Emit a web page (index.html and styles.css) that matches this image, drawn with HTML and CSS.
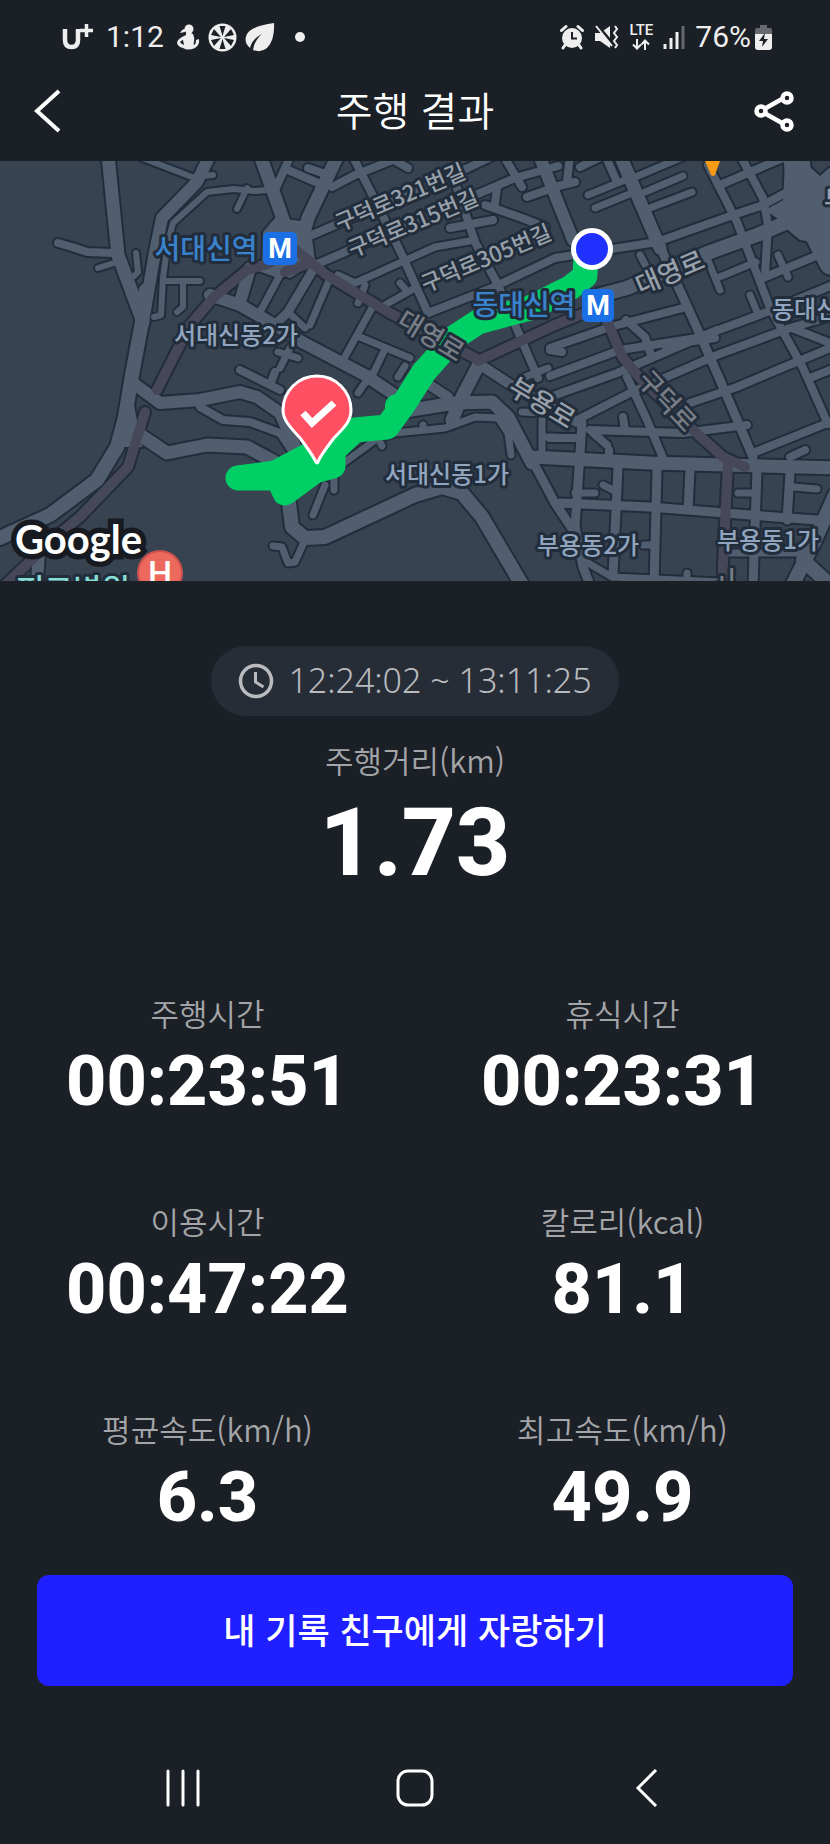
FILE: index.html
```html
<!DOCTYPE html>
<html lang="ko">
<head>
<meta charset="utf-8">
<meta name="viewport" content="width=device-width, initial-scale=1">
<title>주행 결과</title>
<link rel="stylesheet" href="styles.css">
</head>
<body>
<div class="status">
  <div class="status-left">
    <svg class="carrier" width="32" height="26" viewBox="0 0 32 26" role="img" aria-label="U+"><path d="M3 5v11q0 7 6.500 7t6.500-7V5" fill="none" stroke="#eee" stroke-width="4.500"/><path d="M24.500 0v13M18 6.500h13" stroke="#eee" stroke-width="3.500"/></svg>
    <span class="clock">1:12</span>
    <span class="notices">
      <svg width="24" height="28" viewBox="0 0 24 28" aria-hidden="true"><g fill="#eee"><circle cx="13" cy="6" r="4.500"/><path d="M10 10q4-1 7 1 2 4 1 8-1 2 0 3 2-1 2-5l3-1q1 6-4 9-7 3-12 0-5-1-6-5 0-3 5-6l4-2z"/><path d="M9 6q-3 0-5 4l5-1z"/></g><path d="M4 19q2-2 3-2l1 5q-3-1-4-3z" fill="#1b1f26"/></svg>
      <svg width="29" height="29" viewBox="0 0 29 29" aria-hidden="true"><circle cx="14.500" cy="14.500" r="14" fill="#eee"/><g fill="#1b1f26"><path d="M14.500 13 11.500 3h6z"/><path d="M14.500 16 11.500 26h6z"/><path d="M13 14 3 12l3-6z"/><path d="M16 14 26 12l-3-6z"/><path d="M13 15 3 17l3 6z"/><path d="M16 15 26 17l-3 6z"/></g></svg>
      <svg width="30" height="29" viewBox="0 0 30 29" aria-hidden="true"><path d="M29 0q1 17-7 25-6 5-14 2 1-9 9-16Q7 16 5 25q-7-6-3-14Q7 3 29 0z" fill="#eee"/></svg>
    </span>
    <svg class="more-dot" width="10" height="10" viewBox="0 0 10 10" aria-hidden="true"><circle cx="5" cy="5" r="5" fill="#eee"/></svg>
  </div>
  <div class="status-right">
    <svg width="24" height="26" viewBox="0 0 24 26" aria-hidden="true"><circle cx="12" cy="14" r="10" fill="#eee"/><path d="M1.500 6.500 6 2.500M22.500 6.500 18 2.500" stroke="#eee" stroke-width="3" stroke-linecap="round"/><path d="m5 21-2 3m16-3 2 3" stroke="#eee" stroke-width="3" stroke-linecap="round"/><path d="M12 8v6.500h5" fill="none" stroke="#1b1f26" stroke-width="2"/></svg>
    <svg width="25" height="26" viewBox="0 0 25 26" aria-hidden="true"><path d="M1 9h5l10-7v22L6 17H1z" fill="#eee"/><path d="m3 1 17 20" stroke="#1b1f26" stroke-width="3"/><path d="m2 2 16 20" stroke="#eee" stroke-width="2"/><path d="m21 2 2 3-3 4 3 4-3 4 3 4-2 3" fill="none" stroke="#eee" stroke-width="2"/></svg>
    <span class="network"><span class="lte">LTE</span><svg width="18" height="11" viewBox="0 0 18 11" aria-hidden="true"><path d="M5 0v9M1 5.500l4 4 4-4M13 11V2M9.500 5.500l3.500-4 4 4" fill="none" stroke="#eee" stroke-width="2"/></svg></span>
    <svg class="signal" width="22" height="24" viewBox="0 0 22 24" aria-hidden="true"><path d="M2 24v-5M8 24V13M14 24V7" stroke="#eee" stroke-width="3"/><path d="M20 24V1" stroke="#666a70" stroke-width="3"/></svg>
    <span class="percent">76%</span>
    <svg width="17" height="25" viewBox="0 0 17 25" aria-hidden="true"><path d="M5 0h7v3h3q2 0 2 2v5H0V5q0-2 2-2h3z" fill="#666a70"/><path d="M0 9h17v13q0 3-3 3H3q-3 0-3-3z" fill="#eee"/><path d="m10 8-6 8h4l-1 6 6-8H9z" fill="#1b1f26"/></svg>
  </div>
</div>

<header class="header">
  <button class="icon-btn" type="button" aria-label="뒤로"><svg width="28" height="44" viewBox="0 0 28 44"><path d="M25 2 3 22l22 20" fill="none" stroke="#fff" stroke-width="4"/></svg></button>
  <h1 class="title">주행 결과</h1>
  <button class="icon-btn" type="button" aria-label="공유"><svg width="42" height="44" viewBox="0 0 42 44"><g fill="none" stroke="#fff" stroke-width="4.500"><path d="M12 19 28 10M12 25l16 9"/><circle cx="7" cy="22" r="4.500"/><circle cx="33" cy="9" r="4.500"/><circle cx="33" cy="36" r="4.500"/></g></svg></button>
</header>

<main class="main">
<svg class="map" viewBox="0 161 830 420" role="img" aria-label="주행 경로 지도">
  <defs>
    <g id="roads">
      <path class="road w13" d="M108 155 118 255 143 322"/>
      <path class="road w14" d="M146 290 142 322 132 375 125 417 117 447 97 480 50 515 0 538"/>
      <path class="road w12" d="M210 155 197 182 162 218 155 252 143 322"/>
      <path class="road w6" d="M140 157 192 177 213 175"/>
      <path class="road w6" d="M268 190 255 191 233 189 207 192 173 223 168 242 163 278 161 315 154 317"/>
      <path class="road w6" d="M247 188 237 209M98 268 117 262M136 253 138 272 133 277M163 281H200M183 281V307L177 312"/>
      <path class="road w8" d="M58 243 72 247 87 252 113 253"/>
      <path class="road w13" d="M260 155 278 205 290 240M338 155 308 218 298 255"/>
      <path class="road w8" d="M291 155 275 190M288 170 318 183M308 168 328 175M332 187 355 175 400 157M408 168 385 155"/>
      <path class="road w8" d="M352 155 375 200 402 255 428 313M312 235 468 168 495 155M315 265 345 252 480 193 515 178 558 166"/>
      <path class="road w7" d="M338 275 355 283 435 247 475 240M358 303 365 285M385 305 415 288M400 283 408 292"/>
      <path class="road w8" d="M428 313 492 288 555 258 657 242 733 215 763 205 787 192"/>
      <path class="road w8" d="M455 182 475 242 498 285 528 355 538 378M450 228 493 220M485 205 522 218 545 227M497 188 495 203M503 155 522 187M527 197 550 189"/>
      <path class="road w12" d="M539 155 553 190 573 240"/>
      <path class="road w8" d="M550 188 575 182M570 155 567 182M580 167 605 155M605 155 617 182"/>
      <path class="road w12" d="M210 295 240 305 280 328 302 342 365 375 405 402"/>
      <path class="road w12" d="M250 268 240 302"/>
      <path class="road w7" d="M252 265 280 275 260 312M330 278 310 325M288 312 305 328M372 308 342 362M360 337 410 358M385 349 372 376M278 352 298 358M290 348 280 368"/>
      <path class="road w9" d="M313 270 288 312 275 325"/>
      <path class="road w13" d="M620 155 660 248"/>
      <path class="road w9" d="M657 240 697 328 720 380 753 457"/>
      <path class="road w7" d="M588 195 625 180M595 208 632 193M645 192 683 176M650 208 692 192M633 178 685 156M640 255 647 268M707 258 720 290M717 278 756 262M750 295 757 312M778 255 788 277"/>
      <path class="road w8" d="M708 165 737 222 770 308 803 368 828 424M740 155 763 198 768 225 765 275M720 185 785 157M763 278 835 248"/>
      <path class="road w14" d="M593 297 627 288 710 252 757 235 797 218"/>
      <path class="road w26" d="M795 150 803 205 832 262M800 212 835 180"/>
      <path class="road w8" d="M550 348 610 327 683 308M550 376 620 350 697 338 767 312 835 284M550 397 617 373 717 330M577 420 630 393 717 355 790 328 835 315M690 403 737 387 777 370 835 346M626 320 645 337 652 358M665 345 715 338M550 350 562 352M792 328 835 345"/>
      <path class="road w8" d="M627 377 647 420 663 458M753 453 835 420M590 430 683 433 747 425M810 378 835 368M623 417 625 430M790 457 805 450M593 433 607 445M609 450V456M550 438H577"/>
      <path class="road w10" d="M422 380 448 397M482 366 508 383 577 422"/>
      <path class="road w13" d="M532 457 650 463 835 468M478 366 462 397 452 420M405 411 455 403 492 402 508 417 532 463"/>
      <path class="road w9" d="M532 460 555 503 573 530M582 423 575 527 583 567 590 585M618 467 613 575M657 470 654 585M690 470 688 510M757 470 753 585M790 473 787 520M560 503 650 507 750 515 817 520"/>
      <path class="road w7" d="M575 493H595M603 485 617 492M738 493H754M793 487 817 489M643 545H655M583 560 612 577M613 577 720 582M687 573V580M730 553 800 553"/>
      <path class="road w14" d="M835 495 815 540 790 590M803 560 830 585"/>
      <path class="road w7" d="M345 462 378 438 395 433 445 428 475 417 498 418 508 433 511 455M423 425V430M378 438 382 446M522 412 542 413M542 420V455M542 437H556M398 377 405 366M358 393 372 373M525 377 548 368M334 478V490M325 485 313 515M273 546 282 547 288 563 295 562 305 540"/>
      <path class="road w14" d="M288 495 292 527 305 538 325 537 415 495 442 487 462 493 482 517 525 590"/>
      <path class="road w12" d="M133 383 160 403 200 400 240 392 257 397 280 413 300 457"/>
      <path class="road w8" d="M200 407 223 420 250 422 280 433 297 458M240 370 280 390M275 372 270 385"/>
      <path class="road w13" d="M137 433 167 453 207 445 247 447 275 462"/>
      <path class="road w12" d="M40 530 37 585"/>
      <path class="area" d="M263 232 275 218 310 222 315 262 290 278 262 268zM785 161 803 161 830 185V245L800 240 782 225zM133 400 117 447 142 447zM765 210 787 198 787 225z"/>
    </g>
    <g id="rails">
      <path class="rail w10" d="M285 272 312 262M290 245 325 274 388 312 475 358M478 361 555 325 587 312 600 305 623 358 640 378 693 430 723 457 745 467M728 463 723 563V590"/>
      <path class="rail w10" d="M270 263 247 270 213 298 190 325 163 378 157 390M145 412 128 467 80 517 58 535 5 585"/>
    </g>
  </defs>
  <rect x="0" y="161" width="830" height="420" fill="#384352"/>
  <use href="#roads" class="casing"/>
  <use href="#rails" class="casing"/>
  <use href="#roads" class="surface"/>
  <use href="#rails" class="rail-surface"/>
  <path d="M705 161h15l-5 14q-2 2-4 0z" fill="#f79a14"/>

  <g class="route">
    <path d="M424 372 455 337 478 322 530 308 570 288 585 276 586 255"/>
    <path d="M424 372 403 405 387 427 355 430 338 446"/>
    <path class="solid" d="M238 478 275 473 315 452 333 448 333 466 315 471 285 493 278 478z"/>
    <circle cx="397" cy="406" r="12"/>
  </g>

  <g class="street">
    <text transform="translate(400 197) rotate(-23)" y="8">구덕로321번길</text>
    <text transform="translate(413 223) rotate(-23)" y="8">구덕로315번길</text>
    <text transform="translate(486 258) rotate(-23)" y="8">구덕로305번길</text>
  </g>
  <g class="street avenue">
    <text class="dim" transform="translate(431 336) rotate(31)" y="9">대영로</text>
    <text transform="translate(670 273) rotate(-23)" y="9">대영로</text>
    <text transform="translate(542 403) rotate(31)" y="9">부용로</text>
    <text class="dim" transform="translate(667 401) rotate(47)" y="9">구덕로</text>
    <text class="dim" x="724" y="590">ㅚ</text>
    <text x="836" y="210">부</text>
  </g>
  <g class="district">
    <text x="236" y="344">서대신동2가</text>
    <text x="447" y="483">서대신동1가</text>
    <text x="588" y="554">부용동2가</text>
    <text x="768" y="549">부용동1가</text>
    <text class="from-left" x="772" y="318">동대신동</text>
  </g>
  <g class="station">
    <text x="206" y="259">서대신역</text>
    <text x="524" y="315">동대신역</text>
    <rect x="263" y="232" width="34" height="33" rx="5"/>
    <rect x="582" y="289" width="32" height="33" rx="5"/>
    <text class="metro" x="280" y="258">M</text>
    <text class="metro" x="598" y="315">M</text>
  </g>
  <circle cx="592" cy="249" r="18.500" fill="#2030ff" stroke="#fff" stroke-width="5"/>
  <path d="M316 462q-4-8-16-24c-12-13-17-19-17-28a34 34 0 0 1 68 0c0 10-5 16-17 28q-14 18-16 24-1 2-2 0z" fill="#ff4f63" stroke="#fff" stroke-width="3"/>
  <path d="M303 413 312 423 334 403" fill="none" stroke="#fff" stroke-width="7"/>
  <text class="hospital" x="73" y="601">피그병원</text>
  <circle cx="160" cy="573" r="22" fill="#ee695d" stroke="#c9524c" stroke-width="2"/>
  <text class="hospital-mark" x="160" y="585">H</text>
  <text class="google" x="15" y="554">Google</text>
</svg>

<section class="summary">
  <p class="period"><svg width="36" height="36" viewBox="0 0 36 36" aria-hidden="true"><circle cx="18" cy="18" r="15.500" fill="none" stroke="#b9bbbf" stroke-width="3.500"/><path d="M17.500 9v10l8 5" fill="none" stroke="#b9bbbf" stroke-width="3"/></svg><span>12:24:02 ~ 13:11:25</span></p>
  <dl class="stat hero"><dt>주행거리(km)</dt><dd>1.73</dd></dl>
</section>

<section class="stats">
  <dl class="stat"><dt>주행시간</dt><dd>00:23:51</dd></dl>
  <dl class="stat"><dt>휴식시간</dt><dd>00:23:31</dd></dl>
  <dl class="stat"><dt>이용시간</dt><dd>00:47:22</dd></dl>
  <dl class="stat"><dt>칼로리(kcal)</dt><dd>81.1</dd></dl>
  <dl class="stat"><dt>평균속도(km/h)</dt><dd>6.3</dd></dl>
  <dl class="stat"><dt>최고속도(km/h)</dt><dd>49.9</dd></dl>
</section>

<button class="share" type="button">내 기록 친구에게 자랑하기</button>
</main>

<nav class="system-nav">
  <button class="icon-btn" type="button" aria-label="최근 앱"><svg width="38" height="38" viewBox="0 0 38 38"><path d="M2 2v34M17 2v34M32 2v34" stroke="#fff" stroke-width="3" stroke-linecap="round"/></svg></button>
  <button class="icon-btn" type="button" aria-label="홈"><svg width="38" height="38" viewBox="0 0 38 38"><rect x="2" y="2" width="34" height="34" rx="10" fill="none" stroke="#fff" stroke-width="3"/></svg></button>
  <button class="icon-btn" type="button" aria-label="뒤로"><svg width="38" height="38" viewBox="0 0 38 38"><path d="M30 1 12 19l18 18" fill="none" stroke="#fff" stroke-width="3"/></svg></button>
</nav>
</body>
</html>
```
FILE: styles.css
```css
* { box-sizing: border-box; }

body {
  margin: 0;
  min-height: 100vh;
  display: flex;
  flex-direction: column;
  background: #1b1f26;
  color: #fff;
  font-family: "Noto Sans CJK KR", "Noto Sans", sans-serif;
}

svg { display: block; }
h1, p, dl, dd { margin: 0; }

.icon-btn {
  display: flex;
  padding: 0;
  border: 0;
  background: none;
  cursor: pointer;
}

/* Status bar */
.status {
  display: flex;
  justify-content: space-between;
  align-items: center;
  height: 74px;
  padding: 0 58px 0 62px;
  color: #eee;
  font-family: Roboto, sans-serif;
  font-size: 30px;
  line-height: 36px;
}
.status-left, .status-right, .notices { display: flex; align-items: center; }
.status-left { gap: 12px; }
.notices { gap: 8px; }
.clock, .percent { font-weight: 400; }
.more-dot { margin-left: 8px; }
.status-right { gap: 10px; }
.percent { margin-right: -6px; }
.network { display: flex; flex-direction: column; align-items: center; gap: 2px; }
.lte { font-size: 15px; line-height: 13px; font-weight: 500; }

/* App header */
.header {
  display: grid;
  grid-template-columns: 1fr auto 1fr;
  align-items: center;
  height: 87px;
  padding: 0 34px 14px 34px;
}
.header .icon-btn:last-child { justify-self: end; }
.header .icon-btn:first-child { justify-self: start; }
.title { padding-bottom: 4px; font-size: 40px; line-height: 56px; font-weight: 350; }

.main { display: flex; flex-direction: column; }

/* Map */
.map { width: 100%; height: auto; }
.road, .rail {
  fill: none;
  stroke-linecap: round;
  stroke-linejoin: round;
  stroke-width: calc(var(--w) + var(--edge));
}
.area { stroke-width: var(--edge); }
.casing { --edge: 4px; stroke: #222d3c; fill: #222d3c; }
.surface { --edge: 0px; stroke: #515e70; fill: #515e70; }
.rail-surface { --edge: 0px; stroke: #464758; }
.w6 { --w: 6px; }
.w7 { --w: 7px; }
.w8 { --w: 8px; }
.w9 { --w: 9px; }
.w10 { --w: 10px; }
.w12 { --w: 12px; }
.w13 { --w: 13px; }
.w14 { --w: 14px; }
.w26 { --w: 26px; }
.route path { fill: none; stroke: #00cf66; stroke-width: 25px; stroke-linecap: round; stroke-linejoin: round; }
.route .solid, .route circle { fill: #00cf66; }
.map text {
  text-anchor: middle;
  paint-order: stroke;
  stroke: #222d3c;
  stroke-width: 6px;
  stroke-linejoin: round;
}
.street { fill: #98a0aa; font-size: 22px; font-weight: 500; }
.avenue { font-size: 26px; }
.avenue .dim { fill: #777c85; }
.district { fill: #91a5bf; font-size: 24px; font-weight: 500; }
.station { fill: #3a82cc; font-size: 28px; font-weight: 500; }
.station rect { fill: #1b70e6; }
.map .metro { fill: #fff; stroke: none; font-family: Roboto, sans-serif; font-size: 27px; font-weight: 700; }
.map .from-left, .map .google { text-anchor: start; }
.map .hospital { fill: #86ddd5; font-size: 31px; font-weight: 500; }
.map .hospital-mark { fill: #fff; stroke: none; font-family: Roboto, sans-serif; font-size: 34px; font-weight: 500; }
.map .google { fill: #fff; stroke: #171b21; stroke-width: 11px; stroke-linejoin: miter; font-family: Lato, sans-serif; font-size: 40px; font-weight: 700; }

/* Ride summary */
.summary {
  display: flex;
  flex-direction: column;
  align-items: center;
  padding-top: 65px;
}
.period {
  display: flex;
  align-items: center;
  gap: 14px;
  height: 70px;
  padding: 0 27px;
  border-radius: 35px;
  background: #272d37;
  color: #b9bbbf;
  font-family: "Noto Sans", sans-serif;
  font-size: 34px;
  line-height: 46px;
  font-weight: 300;
}
.period span { padding-bottom: 2px; }
.stat { text-align: center; }
.stat dt { color: #a3a5a8; font-size: 31px; line-height: 40px; font-weight: 350; }
.stat dd { margin-top: 8px; font: 800 70px/80px Roboto, sans-serif; }
.hero { margin-top: 24px; }
.hero dd { margin-top: 11px; font-size: 94px; line-height: 104px; }

.stats {
  display: grid;
  grid-template-columns: 1fr 1fr;
  row-gap: 80px;
  padding-top: 98px;
}

.share {
  height: 111px;
  margin: 38px 37px 0;
  padding: 0 0 4px;
  border: 0;
  border-radius: 12px;
  background: #1f1fff;
  color: #fff;
  font: 500 35px/48px "Noto Sans CJK KR", sans-serif;
  cursor: pointer;
}

/* System navigation */
.system-nav {
  display: flex;
  justify-content: space-between;
  align-items: center;
  height: 112px;
  margin-top: auto;
  padding: 0 20%;
}
```
